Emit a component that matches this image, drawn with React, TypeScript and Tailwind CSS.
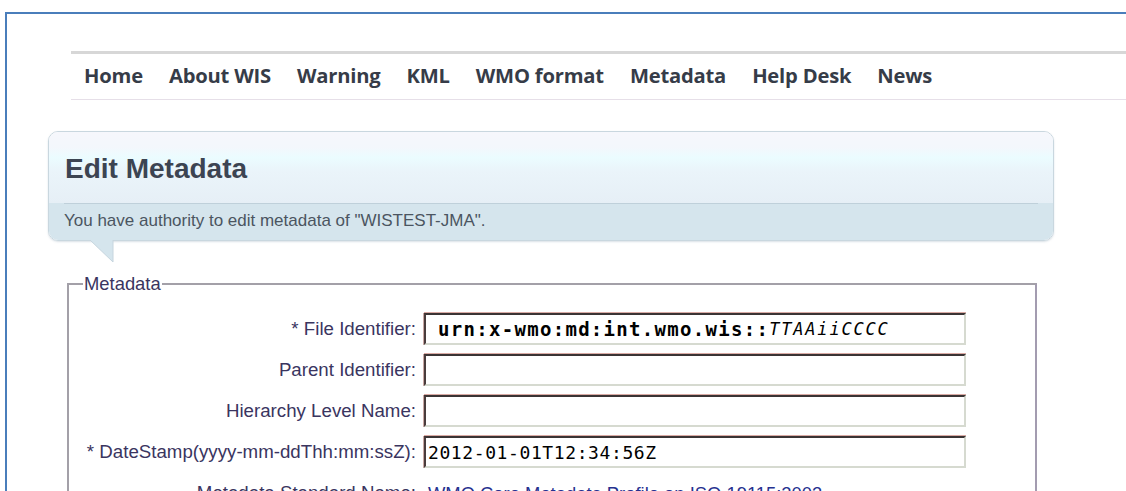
import React from "react";

const navItems = ["Home", "About WIS", "Warning", "KML", "WMO format", "Metadata", "Help Desk", "News"];

function FieldBox({ children }: { children?: React.ReactNode }) {
  return (
    <div className="h-[32px] flex items-center px-[2px] bg-white border-2 border-t-[#3b3434] border-l-[#4a3c3c] border-r-[#d6dad0] border-b-[#d6dad0] shadow-[0_-1px_0_#d9aaa4,-1px_0_0_#c9a8a4]">
      {children}
    </div>
  );
}

function Row({ label, children }: { label: string; children?: React.ReactNode }) {
  return (
    <>
      <div className="flex items-center justify-end text-[18.7px] text-[#3a355f] whitespace-nowrap">{label}</div>
      {children}
    </>
  );
}

export default function App() {
  return (
    <div className="h-[491px] overflow-hidden bg-white pt-3 pl-[5px] font-['Liberation_Sans',Arial,sans-serif]">
      <div className="h-[490px] border-t-2 border-l-2 border-[#4a7ebb]">
        {/* top navigation */}
        <nav className="ml-[64px] mt-[37px] h-[49px] flex items-center gap-[26px] pl-[13px] border-t-[3px] border-t-[#d7d7d7] border-b border-b-[#e6dfe8] font-['Open_Sans',sans-serif] font-bold text-[20.2px] text-[#363c48]">
          {navItems.map((item) => (
            <span key={item} className="tracking-[-0.2px] pb-[3px]">{item}</span>
          ))}
        </nav>

        {/* page header bubble */}
        <div className="relative ml-[41px] mt-[31px] w-[1006px]">
          <div className="h-[110px] rounded-[10px] border border-[#c9d7df] overflow-hidden shadow-[0_1px_2px_rgba(150,170,185,0.35)] flex flex-col">
            <div className="h-[71px] bg-[linear-gradient(to_bottom,#f6f7fc_0%,#f3f7fc_22%,#ebfcff_36%,#eaf4fa_55%,#e6eff6_100%)] pl-[16px] pt-[23px]">
              <h1 className="text-[28px] font-bold text-[#3c4452] leading-none">Edit Metadata</h1>
            </div>
            <div className="flex-1 bg-[#d5e5ed]">
              <div className="mx-[15px] border-t border-[#bfd0da] pt-[4px] text-[17px] text-[#4b5561]">
                You have authority to edit metadata of "WISTEST-JMA".
              </div>
            </div>
          </div>
          <svg className="absolute left-[41px] top-[109px]" width="26" height="24" viewBox="0 0 26 24">
            <path d="M1 0 L24 22 L24 0 Z" fill="#d5e5ed" />
            <path d="M1 0 L24 22 L24 0" fill="none" stroke="#c6d5de" strokeWidth="1" />
            <path d="M2 0 L23 0" stroke="#d5e5ed" strokeWidth="2" />
          </svg>
        </div>

        {/* metadata form */}
        <fieldset className="ml-[60px] mt-[34px] w-[970px] border-2 border-[#a3a0a8] border-r-[#a39cb0] pt-[19px] h-[300px]">
          <legend className="ml-[14px] px-[1px] text-[18.4px] text-[#3a355f] leading-none">Metadata</legend>
          <div className="grid grid-cols-[347px_542px] auto-rows-[32px] gap-x-[8px] gap-y-[9px] mt-[1px]">
            <Row label="* File Identifier:">
              <FieldBox>
                <span className="pl-[10px] font-['DejaVu_Sans_Mono',monospace] font-bold text-[19px] tracking-[1.3px] text-black">
                  urn:x-wmo:md:int.wmo.wis::
                </span>
                <span className="font-['DejaVu_Sans_Mono',monospace] italic text-[17px] tracking-[1.8px] text-black">TTAAiiCCCC</span>
              </FieldBox>
            </Row>
            <Row label="Parent Identifier:">
              <FieldBox />
            </Row>
            <Row label="Hierarchy Level Name:">
              <FieldBox />
            </Row>
            <Row label="* DateStamp(yyyy-mm-ddThh:mm:ssZ):">
              <FieldBox>
                <span className="font-['DejaVu_Sans_Mono',monospace] text-[18px] tracking-[0.6px] text-black">2012-01-01T12:34:56Z</span>
              </FieldBox>
            </Row>
            <Row label="Metadata Standard Name:">
              <div className="flex items-center text-[18.4px] text-[#26318f] pl-[4px] whitespace-nowrap">WMO Core Metadata Profile on ISO 19115:2003</div>
            </Row>
          </div>
        </fieldset>
      </div>
    </div>
  );
}
